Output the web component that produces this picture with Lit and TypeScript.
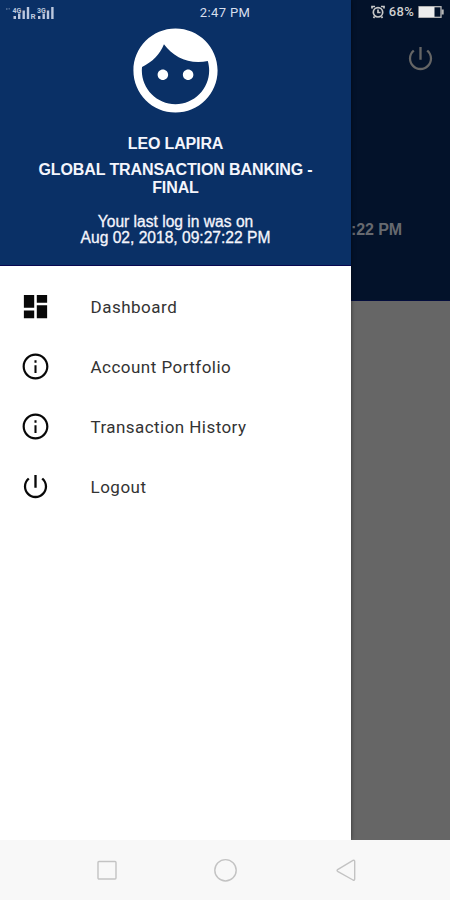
import { LitElement, html, css, svg } from "lit";
import { customElement } from "lit/decorators.js";

const INFO = svg`<path d="M11.200 17h1.600v-6h-1.600v6zM12 2C6.480 2 2 6.480 2 12s4.480 10 10 10 10-4.480 10-10S17.520 2 12 2zm0 18.300c-4.600 0-8.300-3.700-8.300-8.300S7.400 3.700 12 3.700s8.300 3.700 8.300 8.300-3.700 8.300-8.300 8.300zM11.200 9h1.600V7.200h-1.600V9z"/>`;
const POWER = svg`<path d="M12.900 3h-1.800v10h1.800V3zm4.930 2.170l-1.250 1.250C18.200 7.700 19.250 9.700 19.250 12c0 4-3.250 7.250-7.250 7.250S4.750 16 4.750 12c0-2.300 1.050-4.300 2.670-5.580L6.170 5.170C4.230 6.820 3 9.260 3 12c0 4.970 4.030 9 9 9s9-4.030 9-9c0-2.740-1.230-5.180-3.170-6.830z"/>`;
const DASH = svg`<path d="M3 13h8V3H3v10zm0 8h8v-6H3v6zm10 0h8V11h-8v10zm0-18v6h8V3h-8z"/>`;

const ITEMS = [
  { label: "Dashboard", icon: DASH, cls: "dash" },
  { label: "Account Portfolio", icon: INFO, cls: "account" },
  { label: "Transaction History", icon: INFO, cls: "history" },
  { label: "Logout", icon: POWER, cls: "logout" },
];

@customElement("app-root")
class AppRoot extends LitElement {
  static styles = css`
    :host { display: block; width: 450px; height: 900px; overflow: hidden; font-family: "Liberation Sans", Arial, sans-serif; }
    svg { display: block; }
    .screen { position: relative; display: flex; flex-direction: column; height: 900px; }
    .body { display: flex; height: 840px; overflow: hidden; }
    .drawer { width: 351px; flex: none; background: #fff; box-shadow: 0 0 4px rgba(0,0,0,.55); z-index: 1; }
    .head { box-sizing: border-box; height: 266px; padding-top: 20px; background: #0a3066; border-bottom: 1px solid #080850; color: #f4f5fc; display: flex; flex-direction: column; align-items: center; text-align: center; white-space: nowrap; }
    .face { width: 101px; height: 101px; fill: #fff; }
    .name { margin-top: 13px; font-weight: 700; font-size: 16px; line-height: 19px; letter-spacing: -.15px; }
    .org { margin-top: 8px; font-weight: 700; font-size: 16px; line-height: 18px; letter-spacing: -.1px; }
    .last { margin-top: 17px; font-size: 15.600px; line-height: 15.500px; -webkit-text-stroke: .3px; }
    .menu { padding-top: 11px; }
    .item { height: 60px; display: flex; align-items: center; padding-left: 20px; color: #333; font: 400 17px/22px Roboto, sans-serif; }
    .item svg { width: 31px; height: 31px; fill: #080808; margin: 0 39.500px 2px 0; }
    .dash { letter-spacing: .5px; }
    .account { letter-spacing: .47px; }
    .history { letter-spacing: .44px; }
    .logout { letter-spacing: .5px; }
    .behind { flex: 1; background: #666; }
    .hero { box-sizing: border-box; height: 301px; padding-top: 42.500px; background: #03122a; border-bottom: 1px solid #030d3c; display: flex; flex-direction: column; color: #66696f; }
    .hero svg { width: 31px; height: 31px; margin-left: 54px; fill: #656565; }
    .stamp { margin-top: 147.500px; font-size: 16px; line-height: 18px; font-weight: 700; letter-spacing: -.1px; white-space: nowrap; }
    .status { position: absolute; z-index: 2; inset: 0 0 auto 0; height: 24px; display: grid; grid-template-columns: 1fr auto 1fr; align-items: center; color: #d8dfed; font: 400 13px/24px Roboto, sans-serif; }
    .signal { width: 60px; height: 24px; }
    .time { letter-spacing: .35px; padding-top: 1px; }
    .right { display: flex; justify-content: flex-end; align-items: center; gap: 4px; padding: 0 5px 1px 0; color: #d0d0d0; }
    .pct { font-weight: 500; letter-spacing: .3px; }
    .nav { height: 60px; background: #f8f8f8; display: flex; align-items: center; padding-left: 95px; gap: 96px; }
    .nav svg { width: 24px; height: 24px; fill: none; stroke: #c3c3c3; stroke-width: 1.400; overflow: visible; }
  `;

  render() {
    return html`
      <div class="screen">
        <div class="status">
          <svg class="signal" viewBox="0 0 60 24">
            <g fill="#bcc8de">
              <path d="M13.500 15h2.500v3h-2.500zM18 12.500h2.400V18h-2.400zM22.500 9.500h2.400V18h-2.400zM26.800 6h2.400V18h-2.400zM38 15h2.400v3h-2.400zM42.500 12.500h2.400V18h-2.400zM46.800 9.500h2.400V18h-2.400zM51.200 6h2.400V18h-2.400z"/>
              <path d="M6 7h1.500v2H6zM8.500 7H10v1.500H8.500z" opacity=".35"/>
              <text x="12.500" y="11.500" font-family="Roboto" font-size="7" font-weight="700">4G</text>
              <text x="30.500" y="18" font-family="Roboto" font-size="8" font-weight="700">R</text>
              <text x="37" y="11.500" font-family="Roboto" font-size="7" font-weight="700">3G</text>
            </g>
          </svg>
          <span class="time">2:47 PM</span>
          <div class="right">
            <svg width="14" height="14" viewBox="0 0 14 14" fill="none" stroke="#c8c8c8" stroke-width="1.700"><circle cx="7" cy="7.300" r="4.700"/><path d="M1 3.500V1.500h3M13 3.500V1.500h-3M7 4.500v3h2.500M3.500 11.500l-1 1.500M10.500 11.500l1 1.500"/></svg>
            <span class="pct">68%</span>
            <svg width="27" height="14" viewBox="0 0 27 14"><rect x="1" y="1.700" width="22" height="10.600" fill="none" stroke="#b8b8b8" stroke-width="1.300"/><path d="M1 2h15.500v10H1z" fill="#ededed"/><path d="M23.500 4.500h2.200v5h-2.200z" fill="#b8b8b8"/></svg>
          </div>
        </div>
        <div class="body">
          <div class="drawer">
            <div class="head">
              <svg class="face" viewBox="0 0 24 24"><path d="M9 11.750c-.69 0-1.250.56-1.250 1.250s.56 1.250 1.250 1.250 1.250-.56 1.250-1.250-.56-1.250-1.250-1.250zm6 0c-.69 0-1.250.56-1.250 1.250s.56 1.250 1.250 1.250 1.250-.56 1.250-1.250-.56-1.250-1.250-1.250zM12 2C6.480 2 2 6.480 2 12s4.480 10 10 10 10-4.480 10-10S17.520 2 12 2zm0 18c-4.410 0-8-3.590-8-8 0-.29.02-.58.05-.86 2.360-1.050 4.230-2.980 5.210-5.370C11.070 8.330 14.050 10 17.420 10c.78 0 1.530-.09 2.250-.26.21.71.33 1.470.33 2.260 0 4.410-3.590 8-8 8z"/></svg>
              <div class="name">LEO LAPIRA</div>
              <div class="org">GLOBAL TRANSACTION BANKING -<br />FINAL</div>
              <div class="last">Your last log in was on<br />Aug 02, 2018, 09:27:22 PM</div>
            </div>
            <div class="menu">
              ${ITEMS.map((i) => html`<div class="item ${i.cls}"><svg viewBox="0 0 24 24">${i.icon}</svg><span>${i.label}</span></div>`)}
            </div>
          </div>
          <div class="behind">
            <div class="hero">
              <svg viewBox="0 0 24 24">${POWER}</svg>
              <div class="stamp">:22 PM</div>
            </div>
          </div>
        </div>
        <div class="nav">
          <svg viewBox="0 0 24 24"><rect x="3" y="3.500" width="18" height="17.500" rx="1"/></svg>
          <svg viewBox="0 0 24 24"><circle cx="10.500" cy="12.300" r="10.700"/></svg>
          <svg viewBox="0 0 24 24"><path d="M18 2.400c1-.5 1.700 0 1.700.9v17.800c0 1-.7 1.400-1.700.9L2.600 13.300c-.7-.5-.7-1.200 0-1.700z"/></svg>
        </div>
      </div>
    `;
  }
}
